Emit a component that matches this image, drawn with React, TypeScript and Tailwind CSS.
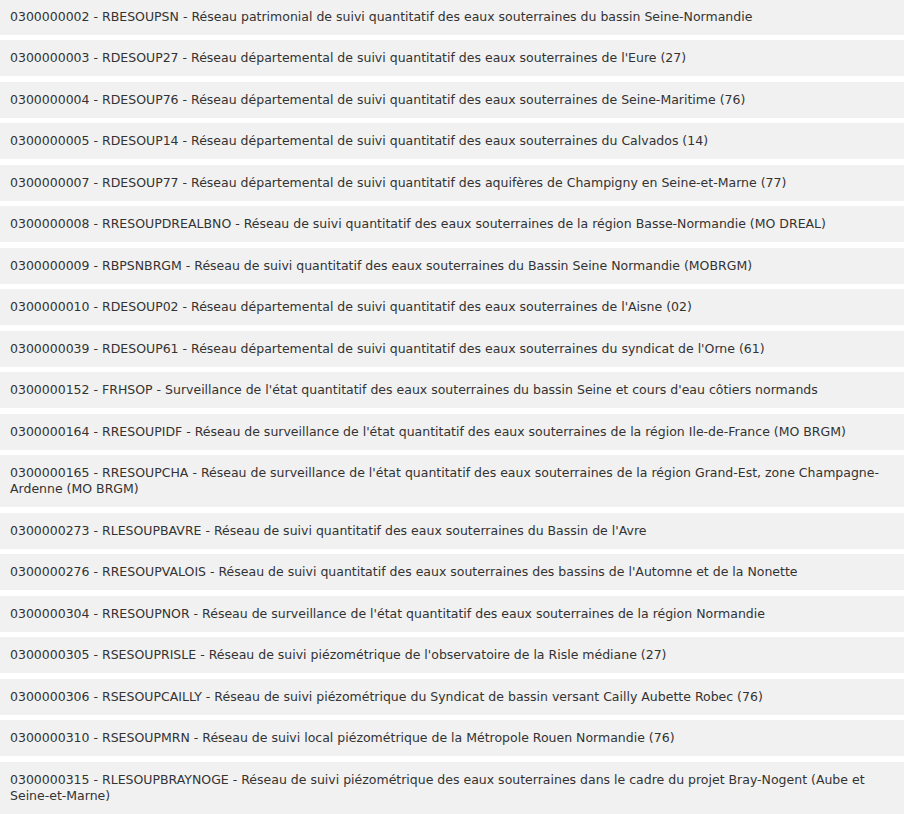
import React from 'react';

const reseaux: [string, string, string][] = [
  ['0300000002', 'RBESOUPSN', 'Réseau patrimonial de suivi quantitatif des eaux souterraines du bassin Seine-Normandie'],
  ['0300000003', 'RDESOUP27', "Réseau départemental de suivi quantitatif des eaux souterraines de l'Eure (27)"],
  ['0300000004', 'RDESOUP76', 'Réseau départemental de suivi quantitatif des eaux souterraines de Seine-Maritime (76)'],
  ['0300000005', 'RDESOUP14', 'Réseau départemental de suivi quantitatif des eaux souterraines du Calvados (14)'],
  ['0300000007', 'RDESOUP77', 'Réseau départemental de suivi quantitatif des aquifères de Champigny en Seine-et-Marne (77)'],
  ['0300000008', 'RRESOUPDREALBNO', 'Réseau de suivi quantitatif des eaux souterraines de la région Basse-Normandie (MO DREAL)'],
  ['0300000009', 'RBPSNBRGM', 'Réseau de suivi quantitatif des eaux souterraines du Bassin Seine Normandie (MOBRGM)'],
  ['0300000010', 'RDESOUP02', "Réseau départemental de suivi quantitatif des eaux souterraines de l'Aisne (02)"],
  ['0300000039', 'RDESOUP61', "Réseau départemental de suivi quantitatif des eaux souterraines du syndicat de l'Orne (61)"],
  ['0300000152', 'FRHSOP', "Surveillance de l'état quantitatif des eaux souterraines du bassin Seine et cours d'eau côtiers normands"],
  ['0300000164', 'RRESOUPIDF', "Réseau de surveillance de l'état quantitatif des eaux souterraines de la région Ile-de-France (MO BRGM)"],
  ['0300000165', 'RRESOUPCHA', "Réseau de surveillance de l'état quantitatif des eaux souterraines de la région Grand-Est, zone Champagne-Ardenne (MO BRGM)"],
  ['0300000273', 'RLESOUPBAVRE', "Réseau de suivi quantitatif des eaux souterraines du Bassin de l'Avre"],
  ['0300000276', 'RRESOUPVALOIS', "Réseau de suivi quantitatif des eaux souterraines des bassins de l'Automne et de la Nonette"],
  ['0300000304', 'RRESOUPNOR', "Réseau de surveillance de l'état quantitatif des eaux souterraines de la région Normandie"],
  ['0300000305', 'RSESOUPRISLE', "Réseau de suivi piézométrique de l'observatoire de la Risle médiane (27)"],
  ['0300000306', 'RSESOUPCAILLY', 'Réseau de suivi piézométrique du Syndicat de bassin versant Cailly Aubette Robec (76)'],
  ['0300000310', 'RSESOUPMRN', 'Réseau de suivi local piézométrique de la Métropole Rouen Normandie (76)'],
  ['0300000315', 'RLESOUPBRAYNOGE', 'Réseau de suivi piézométrique des eaux souterraines dans le cadre du projet Bray-Nogent (Aube et Seine-et-Marne)'],
];

export default function App() {
  return (
    <div className="w-[904px] -mt-[1.5px] bg-white font-['DejaVu_Sans',sans-serif] text-[12.5px] leading-[16px] text-[#333]">
      {reseaux.map(([code, sigle, libelle]) => (
        <div key={code} className="bg-[#f1f1f1] py-[10px] pl-[10px] pr-[12px] mb-[5.5px]">
          {code} - {sigle} - {libelle}
        </div>
      ))}
    </div>
  );
}
